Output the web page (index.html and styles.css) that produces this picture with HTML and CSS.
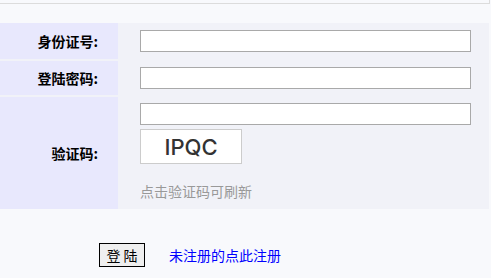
FILE: index.html
```html
<!DOCTYPE html>
<html>
<head>
<meta charset="utf-8">
<link rel="stylesheet" href="styles.css">
</head>
<body>
<div class="topbox"></div>
<div class="form">
  <div class="label r1">身份证号:</div>
  <div class="field r1"><input class="txt" type="text"></div>
  <div class="label r2">登陆密码:</div>
  <div class="field r2"><input class="txt" type="password"></div>
  <div class="label r3">验证码:</div>
  <div class="field r3 stack">
    <input class="txt" type="text">
    <div class="captcha">IPQC</div>
    <div class="hint">点击验证码可刷新</div>
  </div>
</div>
<div class="actions">
  <button class="btn" type="button">登 陆</button>
  <a class="reg" href="#">未注册的点此注册</a>
</div>
</body>
</html>
```
FILE: styles.css
```css
html, body {
  margin: 0;
  padding: 0;
  background: #f8f9fc;
  font-family: "Noto Sans CJK SC", "Noto Sans", sans-serif;
}
.topbox {
  width: 489px;
  height: 3px;
  border-right: 1px solid #dcdcdc;
  border-bottom: 1px solid #dcdcdc;
}
.form {
  margin-top: 19px;
  width: 489px;
  background: #f1f2f8;
  display: grid;
  grid-template-columns: 118px 1fr;
  grid-template-rows: 36px 34px 112px;
  row-gap: 2px;
}
.label {
  background: #e8e8fd;
  font-size: 14px;
  font-weight: bold;
  color: #000;
  display: flex;
  align-items: center;
  justify-content: flex-end;
  padding-right: 20px;
  line-height: 1;
}
.field {
  display: flex;
  align-items: center;
  padding-left: 22px;
}
.txt {
  box-sizing: border-box;
  width: 331px;
  height: 22px;
  margin: 0;
  border: 1px solid #a9a9a9;
  background: #fff;
  padding: 0 3px;
}
.stack {
  flex-direction: column;
  align-items: flex-start;
  justify-content: flex-start;
  padding-top: 6px;
}
.captcha {
  box-sizing: border-box;
  margin-top: 4px;
  width: 102px;
  height: 35px;
  border: 1px solid #cccccc;
  background: #fff;
  color: #333;
  font-family: "Inter", "Noto Sans", sans-serif;
  font-size: 22px;
  font-weight: 500;
  display: flex;
  align-items: center;
  justify-content: center;
}
.hint {
  margin-top: 19px;
  font-size: 14px;
  line-height: 16px;
  color: #999;
}
.actions {
  display: flex;
  align-items: center;
  padding-left: 99px;
  margin-top: 34px;
}
.btn {
  box-sizing: border-box;
  width: 46px;
  height: 24px;
  border: 1px solid #000;
  background: #efefef;
  font-family: "Noto Sans CJK SC", sans-serif;
  font-size: 14px;
  padding: 0;
  line-height: 1;
  color: #000;
}
.reg {
  margin-left: 24px;
  font-size: 14px;
  color: #0000ff;
  text-decoration: none;
}
```
